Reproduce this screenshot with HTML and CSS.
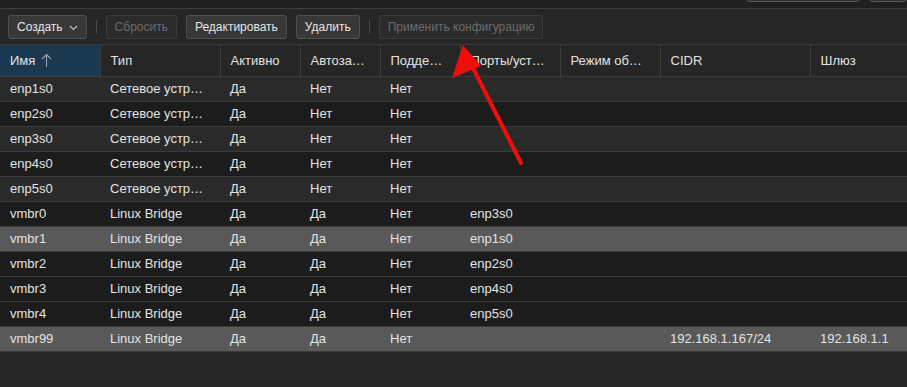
FILE: index.html
```html
<!DOCTYPE html>
<html lang="ru">
<head>
	<meta charset="UTF-8">
	<meta name="viewport" content="width=device-width, initial-scale=1.0">
	<title>Сеть</title>
	<link rel="stylesheet" href="styles.css">
</head>
<body>
	<div class="topbar">
		<div class="top-btn wide"></div>
		<div class="top-btn"></div>
	</div>
	<div class="toolbar">
		<button class="btn">Создать
			<svg class="caret" width="9" height="6" viewBox="0 0 9 6"><path d="M1 1 L4.5 4.5 L8 1" fill="none" stroke="#bdbdbd" stroke-width="1.2"/></svg>
		</button>
		<span class="sep"></span>
		<button class="btn" disabled>Сбросить</button>
		<button class="btn">Редактировать</button>
		<button class="btn">Удалить</button>
		<span class="sep"></span>
		<button class="btn" disabled>Применить конфигурацию</button>
	</div>
	<div class="grid">
		<table>
			<colgroup>
				<col class="c1"><col class="c2"><col class="c3"><col class="c4"><col class="c5">
				<col class="c6"><col class="c7"><col class="c8"><col class="c9">
			</colgroup>
			<thead>
				<tr>
					<th class="sorted">Имя
						<svg class="sort" width="11" height="15" viewBox="0 0 11 15"><path d="M5.5 14 V1.5 M1 6 L5.5 1.5 L10 6" fill="none" stroke="#9aa3ab" stroke-width="1.1"/></svg>
					</th>
					<th>Тип</th>
					<th>Активно</th>
					<th>Автоза…</th>
					<th>Подде…</th>
					<th>Порты/уст…</th>
					<th>Режим об…</th>
					<th>CIDR</th>
					<th>Шлюз</th>
				</tr>
			</thead>
			<tbody>
				<tr class="alt"><td>enp1s0</td><td>Сетевое устр…</td><td>Да</td><td>Нет</td><td>Нет</td><td></td><td></td><td></td><td></td></tr>
				<tr><td>enp2s0</td><td>Сетевое устр…</td><td>Да</td><td>Нет</td><td>Нет</td><td></td><td></td><td></td><td></td></tr>
				<tr class="alt"><td>enp3s0</td><td>Сетевое устр…</td><td>Да</td><td>Нет</td><td>Нет</td><td></td><td></td><td></td><td></td></tr>
				<tr><td>enp4s0</td><td>Сетевое устр…</td><td>Да</td><td>Нет</td><td>Нет</td><td></td><td></td><td></td><td></td></tr>
				<tr class="alt"><td>enp5s0</td><td>Сетевое устр…</td><td>Да</td><td>Нет</td><td>Нет</td><td></td><td></td><td></td><td></td></tr>
				<tr><td>vmbr0</td><td>Linux Bridge</td><td>Да</td><td>Да</td><td>Нет</td><td>enp3s0</td><td></td><td></td><td></td></tr>
				<tr class="sel"><td>vmbr1</td><td>Linux Bridge</td><td>Да</td><td>Да</td><td>Нет</td><td>enp1s0</td><td></td><td></td><td></td></tr>
				<tr><td>vmbr2</td><td>Linux Bridge</td><td>Да</td><td>Да</td><td>Нет</td><td>enp2s0</td><td></td><td></td><td></td></tr>
				<tr><td>vmbr3</td><td>Linux Bridge</td><td>Да</td><td>Да</td><td>Нет</td><td>enp4s0</td><td></td><td></td><td></td></tr>
				<tr><td>vmbr4</td><td>Linux Bridge</td><td>Да</td><td>Да</td><td>Нет</td><td>enp5s0</td><td></td><td></td><td></td></tr>
				<tr class="sel"><td>vmbr99</td><td>Linux Bridge</td><td>Да</td><td>Да</td><td>Нет</td><td></td><td></td><td>192.168.1.167/24</td><td>192.168.1.1</td></tr>
			</tbody>
		</table>
	</div>
	<!-- красная стрелка поверх таблицы -->
	<svg class="pointer" width="907" height="387" viewBox="0 0 907 387">
		<line x1="521" y1="163" x2="472" y2="66" stroke="#f20d0d" stroke-width="4" stroke-linecap="round"/>
		<polygon points="463,45 452,78 481,66" fill="#f20d0d"/>
	</svg>
</body>
</html>
```

FILE: styles.css
```css
/* тёмная тема, как в панели управления */
*{box-sizing: border-box;}
body{
	margin: 0; height: 387px; overflow: hidden;
	background: #262626; color: #e3e3e3;
	font-family: "Liberation Sans", Arial, sans-serif; font-size: 13px;
	position: relative;
}

/* обрезанная верхняя панель */
.topbar{
	height: 9px; background: #202020;
	border-bottom: 1px solid #3d3d3d;
	display: flex; justify-content: flex-end; gap: 9px;
	overflow: hidden;
}
.top-btn{
	width: 38px; height: 24px; margin-top: -22px;
	border: 1px solid #5a5a5a; border-radius: 4px; background: #2c2c2c;
}
.top-btn.wide{width: 114px;}

/* панель кнопок */
.toolbar{
	height: 36px; padding: 6px 8px 0;
	display: flex; align-items: flex-start; gap: 9px;
	border-bottom: 1px solid #3d3d3d;
}
.btn{
	height: 24px; padding: 0 8px;
	font: inherit; font-size: 12px; color: #e6e6e6;
	background: #383838; border: 1px solid #515151; border-radius: 3px;
	display: flex; align-items: center; gap: 6px;
}
.btn:disabled{color: #6b6b6b; background: #2b2b2b; border-color: #3b3b3b;}
.caret{margin-top: 1px;}
.sep{width: 1px; height: 14px; margin-top: 5px; background: #4a4a4a;}

/* таблица */
.grid{overflow: hidden;}
table{width: 1000px; table-layout: fixed; border-collapse: collapse;}
.c1{width: 100px;} .c2{width: 120px;} .c3{width: 80px;}
.c4{width: 80px;} .c5{width: 80px;} .c6{width: 100px;}
.c7{width: 100px;} .c8{width: 150px;} .c9{width: 190px;}
th{
	height: 31px; padding: 0 10px;
	font-weight: normal; text-align: left; white-space: nowrap;
	border-right: 1px solid #3d3d3d; border-bottom: 1px solid #3d3d3d;
	color: #e3e3e3;
}
th.sorted{background: #1a3850;}
.sort{vertical-align: -3px; margin-left: 2px;}
td{
	height: 25px; padding: 0 10px;
	white-space: nowrap; overflow: hidden;
	border-bottom: 1px solid #3a3a3a;
}
tbody tr{background: #1c1c1c;}
tbody tr.alt{background: #2a2a2a;}
tbody tr.sel{background: #595959;}

.pointer{position: absolute; left: 0; top: 0; pointer-events: none;}
```
